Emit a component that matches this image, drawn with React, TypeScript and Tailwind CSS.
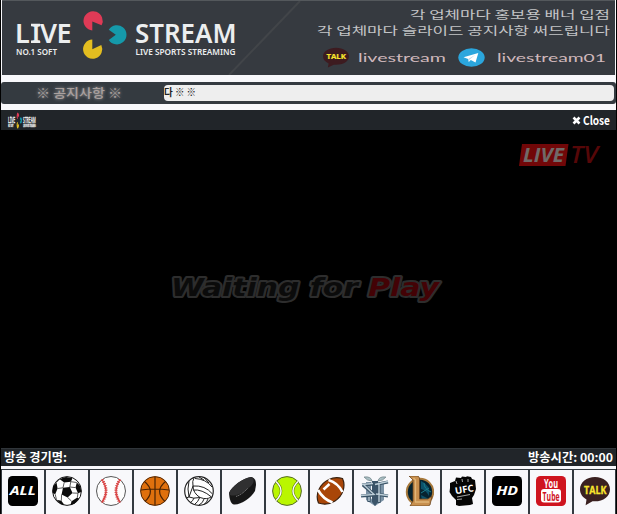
import React from "react";

type FitProps = {
  text: React.ReactNode;
  w: number;
  h: number;
  base: number;
  size: number;
  className?: string;
};

// One line of banner lettering, stretched to a fixed width.
function FitText({ text, w, h, base, size, className = "" }: FitProps) {
  return (
    <svg width={w} height={h} viewBox={`0 0 ${w} ${h}`} className="block overflow-visible">
      <text x="0" y={base} fontSize={size} textLength={w} lengthAdjust="spacingAndGlyphs" className={className}>
        {text}
      </text>
    </svg>
  );
}

function Logo({ className, heavy = 0 }: { className: string; heavy?: number }) {
  return (
    <svg viewBox="14 9 224 52" preserveAspectRatio="none" className={`${className} overflow-visible`}>
      <g fill="#eceeef" stroke="#eceeef" strokeWidth={heavy} className="font-['Noto_Sans',sans-serif]">
        <text x="15 31 40 56.5" y="43" fontSize="27" fontWeight="600">LIVE</text>
        <path d="M31 23.800H40V26.300H31ZM31 40.500H40V43H31Z" />
        <text x="135" y="43" fontSize="27" fontWeight="600" textLength="101.500" lengthAdjust="spacingAndGlyphs">STREAM</text>
        <text x="16" y="54.500" fontSize="8" fontWeight="600" textLength="41" lengthAdjust="spacingAndGlyphs">NO.1 SOFT</text>
        <text x="135.500" y="54.500" fontSize="8" fontWeight="600" textLength="100" lengthAdjust="spacingAndGlyphs">LIVE SPORTS STREAMING</text>
      </g>
      <path d="M92.3 21.5V30.4A9.6 9.6 0 1 1 101.6 25.3Z" fill="#df3a56" />
      <path d="M115.8 34.8L108.8 29.7A9.6 9.6 0 1 1 108.8 40Z" fill="#1599aa" />
      <path d="M92.300 39.600A9.600 9.600 0 1 0 101.300 45L92.300 49.200Z" fill="#e3bd20" />
    </svg>
  );
}

function Talk({ className, dark }: { className: string; dark?: boolean }) {
  return (
    <svg viewBox="0 0 30 30" preserveAspectRatio="none" className={className}>
      <path d="M15 1C6.700 1 0 6.400 0 13.200C0 17.700 2.500 21.200 6.500 23.400L5.600 29.200L12.500 25.200C22 26.200 30 21.200 30 13.200C30 6.400 23.300 1 15 1Z" fill={dark ? "#3d1b20" : "#3a2020"} />
      <text x="4" y="17.500" fontSize="11" fontWeight="700" textLength="22.500" lengthAdjust="spacingAndGlyphs" fill="#f9e52d" stroke="#f9e52d" strokeWidth=".3" className="font-['Open_Sans',sans-serif]">TALK</text>
    </svg>
  );
}

function Telegram() {
  return (
    <svg viewBox="0 0 27 19" className="block h-[19px] w-[27px]">
      <ellipse cx="13.500" cy="9.500" rx="13.200" ry="9.300" fill="#2ba6dd" />
      <path d="M5.500 9.300L20.300 5L17.500 14.500L12.800 11.900L10.800 13.900L10.200 10.900Z" fill="#fff" />
      <path d="M10.200 10.900L17.500 6.800L11.500 11.400L10.800 13.900Z" fill="#b9d9ea" />
    </svg>
  );
}

function Badge({ label }: { label: string }) {
  return (
    <>
      <rect width="30" height="30" rx="4.500" fill="#000" />
      <text x={label === "ALL" ? 1.8 : 4.200} y="19" fontSize="12.500" fontWeight="700" fontStyle="italic" textLength={label === "ALL" ? 26 : 22} lengthAdjust="spacingAndGlyphs" fill="#fff" className="font-['Open_Sans',sans-serif]">{label}</text>
    </>
  );
}

function Soccer() {
  return (
    <>
      <circle cx="15" cy="15" r="14.400" fill="#fff" stroke="#111" />
      <path d="M11 11.800L17.800 11L20.500 17L15.600 21.400L9.600 18.400ZM7.500 3L14 1L20.500 2.300L18.800 5.700L12.200 6.500ZM1 10.500L4.500 6.500L5.600 12.500L3.200 18.300L.7 17ZM24.800 6.500L28.300 10L29.300 16L26 17.200L23.500 11.600ZM4.500 23.800L9.300 24.800L12.500 29L8.200 27.800ZM19.600 25.200L25.300 21.500L27 22.500L22.500 27.700L18.500 28.800Z" fill="#0b0b0b" />
      <path d="M11 11.800L5.600 12.500M11 11.800L12.200 6.500M17.800 11L18.800 5.700M17.800 11L23.500 11.600M20.500 17L26 17.200M15.600 21.400L19.600 25.200M9.600 18.400L9.300 24.800M3.200 18.300L4.500 23.800M26 17.200L25.300 21.500M18.800 5.700L24.800 6.500M4.500 6.500L7.500 3" fill="none" stroke="#333" strokeWidth=".8" />
    </>
  );
}

function Baseball() {
  return (
    <>
      <circle cx="15" cy="15" r="14.500" fill="#fdfdfd" stroke="#444" strokeWidth=".9" />
      <g fill="none" stroke="#d94747">
        <path d="M6 3.500Q14 15 6 26.500M24 3.500Q16 15 24 26.500" strokeWidth="1.300" />
        <path d="M6 3.500Q14 15 6 26.500M24 3.500Q16 15 24 26.500" strokeWidth="3" strokeDasharray="1.100 1.100" />
      </g>
    </>
  );
}

function Basketball() {
  return (
    <>
      <circle cx="15" cy="15" r="14.400" fill="#df700d" stroke="#512502" />
      <path d="M15 1V29M1 14Q15 12 29 14M4.500 5.500Q16 15 5 25.500M25.500 5.500Q14 15 25 25.500" fill="none" stroke="#4a2304" strokeWidth="1.200" />
    </>
  );
}

function Volleyball() {
  return (
    <>
      <circle cx="15" cy="15" r="14.300" fill="#fff" stroke="#222" strokeWidth="1.200" />
      <path d="M10 2Q8 5 9 10Q21 9 28.500 18M11 2.500Q22 3 28 11M9 10Q9 17 16 21.500Q23 24 27 21M9 14Q18 13 27.500 21M5 5Q3 13 5 21M9 10L5 21Q9 23 16 21.500M5 21L2 22M6 27Q9 25 10 22M10.500 28.500Q14 26 15.500 22M15 29Q19 27 20 23M20 28.500Q23 26 24 23M15 1L20 4M20 1.500L25 7" fill="none" stroke="#222" strokeWidth="1" />
    </>
  );
}

function Puck() {
  return (
    <>
      <path d="M1 17C4 10 15 2 23 1C27 1.500 28 5 28 9L27 15C23 22 13 29 6 28.500C3 28 1.500 24 1 17Z" fill="#171717" />
      <path d="M1 17C4 10 15 2 23 1C28 3 26 9 18 14C11 19 2 22 1 17Z" fill="#303031" />
      <path d="M8 20.500Q14 18.500 20 12" fill="none" stroke="#858585" strokeDasharray="1.500 .6" />
    </>
  );
}

function Tennis() {
  return (
    <>
      <circle cx="15" cy="15" r="14.400" fill="#baf600" stroke="#55692b" strokeWidth="1" />
      <path d="M4 5.500Q14 15 4 24.500M26 5.500Q16 15 26 24.500" fill="none" stroke="#60791e" strokeWidth="2.500" />
      <path d="M4 5.500Q14 15 4 24.500M26 5.500Q16 15 26 24.500" fill="none" stroke="#fff" strokeWidth="1.400" />
    </>
  );
}

function Football() {
  return (
    <>
      <path d="M2.500 27C-1 19 3 8 13 3.500Q19 .5 26.500 2.500C30 10 27 20 19 25Q11 30 2.500 27Z" fill="#a94608" stroke="#38200e" strokeWidth="1.200" />
      <path d="M12.500 4Q22 7 26.500 16M2 14Q7 23 16.500 26.500" fill="none" stroke="#fff" strokeWidth="2.600" />
      <path d="M7.500 13.500L13.500 8" stroke="#fff" strokeWidth="2.500" />
    </>
  );
}

function Starcraft() {
  return (
    <>
      <path d="M6 6H11V22L15 29L19 22V6H24V24L15 30L6 24Z" fill="#7a91a4" />
      <path d="M12 5H18V26L15 30L12 26Z" fill="#3b5469" />
      <path d="M4 1Q11 0 12 5Q7 5 4 1ZM26 1Q19 0 18 5Q23 5 26 1Z" fill="#a9bec3" stroke="#63777c" strokeWidth=".6" />
      <path d="M2 9L14 8M3 9L15 19L1 20M13 9L28 6M19 7V27M16 18L28 20M9 21V26" fill="none" stroke="#3a5366" strokeWidth="3.200" />
      <path d="M2 8.500L13 7.500M4 9L14 18.500L1 19.500M15 8.500L28 5.500M19 8V26M16 18L28 19.500M9 21V25" fill="none" stroke="#bccdd7" strokeWidth="1.400" />
    </>
  );
}

function League() {
  return (
    <>
      <circle cx="16" cy="16" r="13.200" fill="#06232f" stroke="#a7783b" strokeWidth="2" />
      <path d="M17 5Q27 9 25 20Q22 14 17 13ZM17 19L25 23L18 25Z" fill="#0b526b" />
      <path d="M20 7Q20 13 27 16M17 17L25 12" stroke="#1b7c8a" fill="none" />
      <path d="M5 0H14L15.500 2V23H24L28 20L26 29L24 30H6L9 25V4Z" fill="#c78f4e" stroke="#6b451f" strokeWidth=".8" />
      <path d="M9.500 2L11.500 4V26H25" fill="none" stroke="#e0b578" strokeWidth="1.300" />
    </>
  );
}

function Ufc() {
  return (
    <>
      <path d="M2 7L7 5L8 1.500L13 2L14 .5L18 1L19 .3L23 1L24 3L27 4L28 13L26 19L24 22L25 28L22 29L11 30L8 29V24L4 20L1.500 16L2 12Z" fill="#050505" />
      <path d="M8 5L9 8M14 3L14.500 6M20 3V6M9 23.500L14 23M9 21L22 18.500" stroke="#e9e9e9" strokeWidth=".7" />
      <text x="7" y="17" fontSize="9.500" fontWeight="700" textLength="19" lengthAdjust="spacingAndGlyphs" fill="#fff" transform="rotate(-9 15 15)" className="font-['Open_Sans',sans-serif]">UFC</text>
    </>
  );
}

function YouTube() {
  return (
    <>
      <rect width="30" height="30" rx="4.500" fill="#cf141f" />
      <rect x="5" y="13" width="20" height="13.500" rx="3" fill="#fff" />
      <g className="font-['Open_Sans',sans-serif]" fontWeight="700" fontSize="12.500">
        <text x="8" y="12" textLength="14" lengthAdjust="spacingAndGlyphs" fill="#fff">You</text>
        <text x="6.600" y="24.500" textLength="17" lengthAdjust="spacingAndGlyphs" fill="#cf141f">Tube</text>
      </g>
    </>
  );
}

const channels: React.ReactNode[] = [
  <Badge label="ALL" />, <Soccer />, <Baseball />, <Basketball />, <Volleyball />, <Puck />, <Tennis />,
  <Football />, <Starcraft />, <League />, <Ufc />, <Badge label="HD" />, <YouTube />,
];

function LiveTv() {
  return (
    <svg viewBox="0 0 82 24" className="block h-[24px] w-[82px] overflow-visible">
      <path d="M3 1H49.500L46.500 23H0Z" fill="#710708" />
      <g className="font-['Open_Sans',sans-serif]" fontWeight="700" fontStyle="italic">
        <text x="4" y="18.500" fontSize="19" textLength="41" lengthAdjust="spacingAndGlyphs" fill="#706a68">LIVE</text>
        <text x="51" y="19.500" fontSize="23" fontWeight="600" textLength="28" lengthAdjust="spacingAndGlyphs" fill="#560708">TV</text>
      </g>
    </svg>
  );
}

function Waiting() {
  return (
    <svg viewBox="0 0 276 38" className="block h-[38px] w-[276px] overflow-visible">
      <text x="4" y="25.500" fontSize="25.500" fontWeight="700" fontStyle="italic" textLength="268" lengthAdjust="spacingAndGlyphs" stroke="#2d2d2d" strokeWidth="4" strokeLinejoin="round" paintOrder="stroke" fill="#0b0b0b" className="font-['DejaVu_Sans',sans-serif]">
        Waiting for <tspan fill="#430205">Play</tspan>
      </text>
    </svg>
  );
}

export default function App() {
  return (
    <div className="flex h-[514px] w-[617px] flex-col overflow-hidden border-x border-black bg-[#f8f8fb] font-['Noto_Sans','Noto_Sans_CJK_KR',sans-serif]">
      <header className="relative ml-px flex h-[75px] w-[613px] shrink-0 justify-between border-t border-[#54585c] bg-[#363a40]">
        <svg viewBox="0 0 613 74" className="absolute inset-0 h-[74px] w-[613px]">
          <path d="M298 0L227 74" stroke="#424549" strokeWidth="2" />
        </svg>
        <Logo className="relative mt-2 ml-3 block h-[52px] w-[224px]" />
        <div className="relative mr-[5px] flex flex-col items-end pt-[6px] font-['Noto_Sans_CJK_KR',sans-serif]">
          <FitText text="각 업체마다 홍보용 배너 입점" w={200} h={15} base={12} size={11} className="fill-[#c4c5c7]" />
          <FitText text="각 업체마다 슬라이드 공지사항 써드립니다" w={293} h={15} base={12.5} size={11} className="fill-[#c4c5c7]" />
          <div className="mt-[10px] mr-1 flex items-center font-['Lato',sans-serif]">
            <Talk dark className="mr-[9px] block h-[21px] w-[26px]" />
            <FitText text="livestream" w={88} h={17} base={12.5} size={12} className="fill-[#d0b8bc]" />
            <div className="mr-3 ml-3"><Telegram /></div>
            <FitText text="livestream01" w={109} h={17} base={12.5} size={12} className="fill-[#d0b8bc]" />
          </div>
        </div>
      </header>

      <section className="mt-[7px] flex h-[22px] shrink-0 items-center rounded-[3px] bg-[#343a40] pr-[2px]">
        <div className="w-[163px] pl-[35px]">
          <FitText text="※ 공지사항 ※" w={86} h={16} base={12.5} size={12} className="fill-[#aaa09e] font-['Noto_Sans_CJK_KR',sans-serif] font-medium [text-shadow:0_0_3px_#aaa]" />
        </div>
        <div className="flex h-4 flex-1 items-center overflow-hidden rounded-[4px] bg-[#eee]">
          <FitText text="다 ※ ※" w={32} h={16} base={10.5} size={10} className="fill-[#222] font-['Noto_Sans_CJK_KR',sans-serif] font-bold" />
        </div>
      </section>

      <div className="mt-[6px] flex h-5 shrink-0 items-center justify-between bg-[#212529] pr-[6px] pl-[7px]">
        <Logo heavy={0.8} className="block h-[17px] w-[28px]" />
        <button className="flex items-center gap-[2px] text-white">
          <svg viewBox="0 0 9 9" className="h-[9px] w-[9px]"><path d="M1.500 1.500L7.500 7.500M7.500 1.500L1.500 7.500" stroke="#fff" strokeWidth="2.600" /></svg>
          <FitText text="Close" w={27} h={16} base={12.5} size={12} className="fill-white font-['Noto_Sans_CJK_KR',sans-serif] font-bold" />
        </button>
      </div>

      <main className="flex h-[318px] shrink-0 flex-col bg-black">
        <div className="mt-[13px] mr-[15px] self-end"><LiveTv /></div>
        <div className="mt-[103px] ml-[166px]"><Waiting /></div>
      </main>

      <div className="flex h-[18px] shrink-0 items-center justify-between border-t border-[#30353a] bg-[#212529] pr-[3px] pl-[3px]">
        <FitText text="방송 경기명:" w={63} h={17} base={12.5} size={12} className="fill-white font-['Noto_Sans_CJK_KR',sans-serif] font-bold" />
        <FitText text="방송시간: 00:00" w={85} h={17} base={12.5} size={12} className="fill-white font-['Noto_Sans_CJK_KR',sans-serif] font-bold" />
      </div>

      <nav className="mt-[3px] flex h-[45px] w-[616px] shrink-0">
        {channels.map((icon, i) => (
          <button key={i} className="flex h-[45px] w-[44px] shrink-0 justify-center border-x border-t border-[#343a40] bg-[#f8f8fb] pt-[6px]">
            <svg viewBox="0 0 30 30" className="block h-[30px] w-[30px]">{icon}</svg>
          </button>
        ))}
        <button className="flex h-[45px] w-[43px] shrink-0 justify-center border-x border-t border-[#343a40] bg-[#f8f8fb] pt-[6px]">
          <Talk className="block h-[30px] w-[30px]" />
        </button>
      </nav>
    </div>
  );
}
